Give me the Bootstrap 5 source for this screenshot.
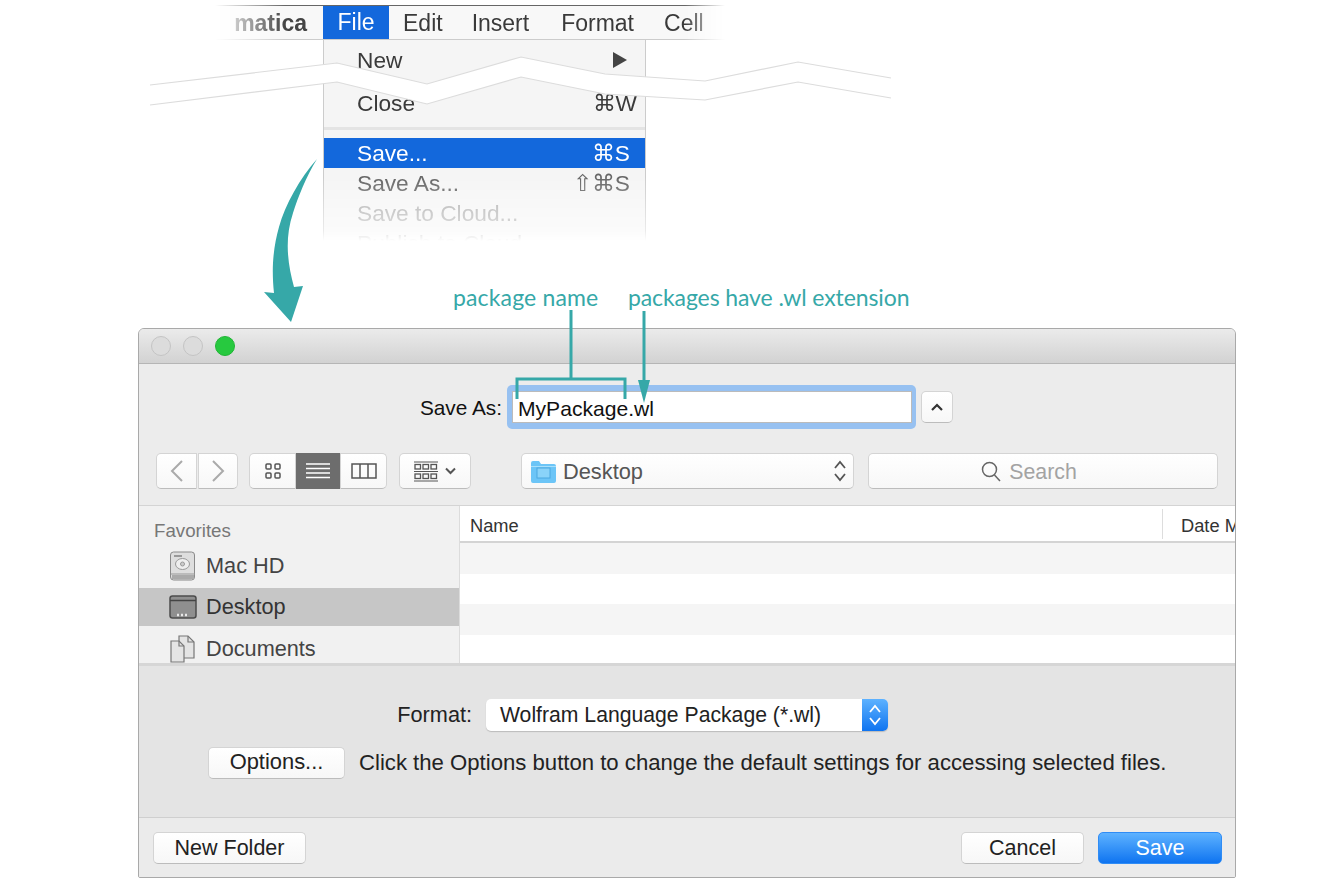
<!DOCTYPE html>
<html lang="en">
<head>
<meta charset="utf-8">
<title>Save As</title>
<link href="https://cdn.jsdelivr.net/npm/bootstrap@5.3.0/dist/css/bootstrap.min.css" rel="stylesheet">
<style>
html,body{background:#fff;margin:0;}
body{font-family:"Liberation Sans",Arial,sans-serif;color:#222;overflow:hidden;}
.stage{position:relative;width:1340px;height:882px;overflow:hidden;}
.top-crop{height:328px;padding-top:5px;}
.mbar{margin-left:215px;width:510px;height:35px;background:#f8f8f8;border-top:1px solid #666;border-bottom:1px solid #ccc;font-size:23px;color:#3a3a3a;
 -webkit-mask-image:linear-gradient(90deg,transparent 0,#000 70px,#000 470px,transparent 510px);mask-image:linear-gradient(90deg,transparent 0,#000 70px,#000 470px,transparent 510px);position:relative;overflow:hidden;}
.mbar-app{width:108px;text-align:right;padding-right:16px;font-weight:700;color:#444;white-space:nowrap;}
.mbar-file{width:66px;height:100%;background:#1368dc;color:#fff;text-align:center;line-height:32px;}
.mbar-item{line-height:32px;white-space:nowrap;}
.m-edit{margin-left:14px;}.m-insert{margin-left:29px;}.m-format{margin-left:32px;}.m-cell{margin-left:30px;}
.mdrop{margin-left:323px;width:323px;height:201px;background:#f5f5f5;border-left:1px solid #ccc;border-right:1px solid #ccc;font-size:22.7px;color:#3a3a3a;overflow:hidden;
 -webkit-mask-image:linear-gradient(180deg,#000 68%,rgba(0,0,0,.4) 95%,transparent 100%);mask-image:linear-gradient(180deg,#000 68%,rgba(0,0,0,.4) 95%,transparent 100%);}
.mrow{height:30px;line-height:30px;padding:0 15px 0 33px;white-space:nowrap;}
.mrow-new{height:40px;line-height:40px;margin-bottom:8px;}
.mrow-close{padding-right:8px;}
.mline{height:3px;background:#e4e4e4;margin:9px 0 8px;}
.mrow-on{background:#1368dc;color:#fff;}
.mrow-dim{color:#666;}
.mrow-off{color:#aaa;}
.tri{width:0;height:0;border-left:14px solid #444;border-top:8px solid transparent;border-bottom:8px solid transparent;margin-right:3px;}
.dlg{margin-left:138px;width:1098px;height:550px;border:1px solid #a9a9a9;border-radius:6px 6px 2px 2px;overflow:hidden;background:#ececec;}
.dlg-title{height:35px;background:linear-gradient(#ebebeb,#d2d2d2);border-bottom:1px solid #b5b5b5;padding-left:12px;gap:12px;}
.lamp{width:20px;height:20px;border-radius:50%;background:#dcdcdc;border:1px solid #c4c4c4;}
.lamp-go{background:#27c93f;border-color:#20b535;}
.dlg-top{height:142px;padding-top:21px;border-bottom:1px solid #d4d4d4;}
.sa-label{width:363px;text-align:right;font-size:20.8px;color:#111;padding-top:2px;}
.sa-ring{width:409px;height:44px;margin-left:5px;background:#97c1f1;border-radius:5px;padding:6px 4px 6px 5px;}
.sa-input{height:32px;border:1px solid #bbb;border-radius:0;padding:3px 5px 0;font-size:21.1px;font-family:inherit;color:#111;box-shadow:none;}
.sa-up{width:32px;height:32px;margin-left:5px;}
.mac{background:linear-gradient(#fff,#f7f7f7);border:1px solid #d4d4d4;border-bottom-color:#bcbcbc;border-radius:5px;color:#222;font-size:20px;padding:0;display:flex;align-items:center;justify-content:center;}
.mac:hover{background:#fff;border-color:#d4d4d4;color:#222;}
.tools{margin-top:24px;padding-left:17px;height:36px;}
.t-back{width:41px;height:36px;border-radius:5px 0 0 5px;}
.t-fwd{width:40px;height:36px;margin-left:1px;border-radius:0 5px 5px 0;}
.t-views{margin-left:11px;width:138px;height:36px;}
.t-views .mac{height:36px;border-radius:0;}
.v1{width:47px;border-radius:5px 0 0 5px!important;}
.v2{width:44px;background:#6d6d6d;border-color:#6d6d6d;}
.v2:hover{background:#6d6d6d;border-color:#6d6d6d;}
.v3{width:47px;border-radius:0 5px 5px 0!important;}
.t-arr{margin-left:12px;width:72px;height:36px;gap:7px;}
.t-path{margin-left:50px;width:333px;height:36px;justify-content:space-between;padding:0 6px 0 9px;color:#555;font-size:21.8px;}
.t-path span{gap:7px!important;}
.t-label{padding-top:2px;}
.t-search{margin-left:14px;width:350px;height:36px;color:#a3a3a3;font-size:21.3px;gap:8px;padding-right:28px;}
.t-search .t-label{padding-top:4px;}
.brow{height:157px;overflow:hidden;}
.side{width:321px;background:#f1f1f1;border-right:1px solid #dcdcdc;flex:none;padding-top:14px;}
.side-h{font-size:18.7px;font-weight:400;color:#777;padding-left:15px;height:21px;line-height:21px;margin-bottom:4px;}
.side-i{height:42px;gap:9px;padding-left:30px;font-size:21.7px;color:#444;background:transparent;border:0;border-radius:0;margin:0;}
.side-on{height:38px;background:#c6c6c6;color:#333;margin-top:1px;}
.side-doc{height:46px;}
.flist{flex:1;background:#fff;min-width:0;overflow:hidden;}
.fhead{height:37px;border-bottom:2px solid #d4d4d4;font-size:18.3px;color:#333;}
.fh-name{width:703px;padding-left:10px;height:30px;line-height:33px;border-right:1px solid #ddd;flex:none;}
.fh-date{padding-left:18px;white-space:nowrap;line-height:33px;height:30px;}
.frow{height:30.5px;}
.frow-alt{background:#f5f5f5;}
.sep3{height:3px;background:#d6d6d6;}
.acc{height:152px;background:#e4e4e4;border-bottom:1px solid #cfcfcf;padding-top:32px;font-size:21.7px;color:#222;}
.fm-label{width:333px;text-align:right;padding-top:1px;}
.fm-sel{margin-left:14px;width:402px;height:32px;background:#fff;border-radius:5px;box-shadow:0 1px 1px #bbb;overflow:hidden;}
.fm-text{padding-left:14px;flex:1;font-size:21.2px;padding-top:1px;}
.fm-stp{width:26px;height:32px;background:linear-gradient(#5db2ff,#0f74f0);}
.opt{margin-top:15px;padding-left:69px;gap:14px;height:32px;}
.opt-note{font-size:22.15px;line-height:32px;}
.b-opt{width:137px;height:32px;font-size:21.9px!important;}
.foot{height:59px;padding:14px 13px 0 14px;background:#ebebeb;}
.b-nf{width:153px;height:32px;}
.b-can{width:123px;height:32px;}
.b-sav{width:124px;height:32px;margin-left:14px;background:linear-gradient(#5db2ff,#0f74f0);color:#fff;border-color:#2f8cf5;}
.b-sav:hover{background:linear-gradient(#5db2ff,#0f74f0);color:#fff;border-color:#2f8cf5;}
.mactxt{font-size:21.5px;}
.callout{position:absolute;color:#36a8a8;font-family:Lato,"Open Sans",sans-serif;font-size:23px;line-height:28px;white-space:nowrap;}
.c1{left:453px;top:283px;letter-spacing:.15px;}
.c2{left:628px;top:283px;letter-spacing:-.1px;}
.overlay{position:absolute;left:0;top:0;pointer-events:none;}
</style>
</head>
<body>
<div class="stage">
  <div class="top-crop">
    <div class="mbar d-flex align-items-center">
      <div class="mbar-app mbar-item">matica</div>
      <div class="mbar-file">File</div>
      <div class="mbar-item m-edit">Edit</div>
      <div class="mbar-item m-insert">Insert</div>
      <div class="mbar-item m-format">Format</div>
      <div class="mbar-item m-cell">Cell</div>
    </div>
    <div class="mdrop">
      <div class="mrow mrow-new d-flex justify-content-between align-items-center"><span>New</span><span class="tri"></span></div>
      <div class="mrow mrow-close d-flex justify-content-between"><span>Close</span><span>⌘W</span></div>
      <div class="mline"></div>
      <div class="mrow mrow-on d-flex justify-content-between"><span>Save...</span><span>⌘S</span></div>
      <div class="mrow mrow-dim d-flex justify-content-between"><span>Save As...</span><span>⇧⌘S</span></div>
      <div class="mrow mrow-off">Save to Cloud...</div>
      <div class="mrow mrow-off">Publish to Cloud</div>
    </div>
  </div>

  <div class="dlg">
    <div class="dlg-title d-flex align-items-center">
      <span class="lamp"></span><span class="lamp"></span><span class="lamp lamp-go"></span>
    </div>
    <div class="dlg-top">
      <div class="d-flex align-items-center">
        <div class="sa-label">Save As:</div>
        <div class="sa-ring"><input class="form-control sa-input" value="MyPackage.wl" aria-label="Save As"></div>
        <button class="btn mac sa-up" aria-label="Collapse"><svg width="14" height="9" viewBox="0 0 14 9"><path d="M2 7 7 2l5 5" fill="none" stroke="#333" stroke-width="2.2"/></svg></button>
      </div>
      <div class="tools d-flex align-items-center">
        <button class="btn mac t-back" aria-label="Back"><svg width="14" height="24" viewBox="0 0 14 24"><path d="M12 2 2 12l10 10" fill="none" stroke="#aaa" stroke-width="2"/></svg></button>
        <button class="btn mac t-fwd" aria-label="Forward"><svg width="14" height="24" viewBox="0 0 14 24"><path d="M2 2l10 10L2 22" fill="none" stroke="#aaa" stroke-width="2"/></svg></button>
        <div class="t-views d-flex">
          <button class="btn mac v1" aria-label="Icons"><svg width="18" height="18" viewBox="0 0 18 18" fill="none" stroke="#555" stroke-width="1.5"><rect x="2" y="2" width="5" height="5" rx="1"/><rect x="11" y="2" width="5" height="5" rx="1"/><rect x="2" y="11" width="5" height="5" rx="1"/><rect x="11" y="11" width="5" height="5" rx="1"/></svg></button>
          <button class="btn mac v2" aria-label="List"><svg width="24" height="18" viewBox="0 0 24 18" stroke="#fff" stroke-width="1.4"><path d="M0 2h24M0 6.500h24M0 11h24M0 15.500h24"/></svg></button>
          <button class="btn mac v3" aria-label="Columns"><svg width="26" height="16" viewBox="0 0 26 16" fill="none" stroke="#555" stroke-width="1.5"><rect x="1" y="1" width="24" height="14"/><path d="M9 1v14M17 1v14"/></svg></button>
        </div>
        <button class="btn mac t-arr" aria-label="Arrange"><svg width="24" height="21" viewBox="0 0 24 21" fill="none" stroke="#555" stroke-width="1.3"><path d="M0 1h24M0 10.500h24M0 20h24" stroke-width="1"/><rect x="1" y="3.500" width="5.500" height="4.500"/><rect x="9" y="3.500" width="5.500" height="4.500"/><rect x="17" y="3.500" width="5.500" height="4.500"/><rect x="1" y="13" width="5.500" height="4.500"/><rect x="9" y="13" width="5.500" height="4.500"/><rect x="17" y="13" width="5.500" height="4.500"/></svg><svg width="11" height="8" viewBox="0 0 11 8"><path d="M1 1.500l4.500 4.500L10 1.500" fill="none" stroke="#555" stroke-width="2"/></svg></button>
        <button class="btn mac t-path">
          <span class="d-flex align-items-center"><svg width="25" height="23" viewBox="0 0 25 23"><path d="M0 3q0-2 2-2h6l2 3h13q2 0 2 2v15q0 2-2 2H2q-2 0-2-2z" fill="#6cc5f7"/><path d="M0 6h25v1H0z" fill="#a9e0fb"/><rect x="6" y="8" width="13" height="10" fill="#8ad3f9" stroke="#4ba8e0"/></svg><span class="t-label">Desktop</span></span>
          <svg width="14" height="24" viewBox="0 0 14 24" fill="none" stroke="#555" stroke-width="1.800"><path d="M2 9l5-6 5 6M2 15l5 6 5-6"/></svg>
        </button>
        <button class="btn mac t-search"><svg width="20" height="21" viewBox="0 0 20 21" fill="none" stroke="#666" stroke-width="1.500"><circle cx="8.500" cy="8.500" r="7"/><path d="M13.500 14l5.500 6"/></svg><span class="t-label">Search</span></button>
      </div>
    </div>
    <div class="brow d-flex">
      <div class="side">
        <div class="side-h">Favorites</div>
        <div class="side-i d-flex align-items-center">
          <svg width="28" height="30" viewBox="0 0 28 30"><rect x="1.500" y="1" width="24" height="28" rx="3" fill="#dedede" stroke="#8a8a8a"/><path d="M2 23h24" stroke="#999"/><rect x="3" y="24" width="22" height="4" fill="#aaa"/><ellipse cx="13.500" cy="13" rx="7" ry="5.500" fill="#eee" stroke="#999"/><circle cx="13.500" cy="13" r="2" fill="#ccc" stroke="#999"/><path d="M5 5h8" stroke="#999" stroke-width="2"/></svg>
          <span>Mac HD</span>
        </div>
        <div class="side-i side-on d-flex align-items-center">
          <svg width="28" height="24" viewBox="0 0 28 24"><rect x="1" y="1" width="26" height="22" rx="2.500" fill="#8f8f8f" stroke="#4c4c4c" stroke-width="1.500"/><path d="M1 5.500h26" stroke="#444" stroke-width="1.500"/><path d="M8 20h2M12 20h2M16 20h2" stroke="#e8e8e8" stroke-width="2.500"/></svg>
          <span>Desktop</span>
        </div>
        <div class="side-i side-doc d-flex align-items-center">
          <svg width="28" height="28" viewBox="0 0 28 28" fill="#e4e4e4" stroke="#777" stroke-width="1.200"><path d="M10 1h9l6 6v16H10z"/><path d="M19 1v6h6" fill="none"/><path d="M2 6h8l5 5v16H2z"/><path d="M10 6v5h5" fill="none"/></svg>
          <span>Documents</span>
        </div>
      </div>
      <div class="flist">
        <div class="fhead d-flex align-items-center"><div class="fh-name">Name</div><div class="fh-date">Date M</div></div>
        <div class="frow frow-alt"></div>
        <div class="frow"></div>
        <div class="frow frow-alt"></div>
        <div class="frow"></div>
      </div>
    </div>
    <div class="sep3"></div>
    <div class="acc">
      <div class="d-flex align-items-center">
        <div class="fm-label">Format:</div>
        <div class="fm-sel d-flex align-items-center">
          <div class="fm-text">Wolfram Language Package (*.wl)</div>
          <div class="fm-stp d-flex align-items-center justify-content-center"><svg width="14" height="24" viewBox="0 0 14 24" fill="none" stroke="#fff" stroke-width="1.800"><path d="M2 9l5-6 5 6M2 15l5 6 5-6"/></svg></div>
        </div>
      </div>
      <div class="opt d-flex align-items-center">
        <button class="btn mac mactxt b-opt">Options...</button>
        <span class="opt-note">Click the Options button to change the default settings for accessing selected files.</span>
      </div>
    </div>
    <div class="foot d-flex justify-content-between">
      <button class="btn mac mactxt b-nf">New Folder</button>
      <div class="d-flex">
        <button class="btn mac mactxt b-can">Cancel</button>
        <button class="btn mac mactxt b-sav">Save</button>
      </div>
    </div>
  </div>

  <svg class="overlay" width="1340" height="882" viewBox="0 0 1340 882" fill="none">
    <polygon points="150,85 337,63 427,84 521,57 605,74 705,81 798,62 891,78 891,98 798,82 705,100 605,94 521,77 427,104 337,82 150,105" fill="#fff"/>
    <polyline points="150,85 337,63 427,84 521,57 605,74 705,81 798,62 891,78" stroke="#dcdcdc" stroke-width="1.200"/>
    <polyline points="150,105 337,82 427,104 521,77 605,94 705,100 798,82 891,98" stroke="#dcdcdc" stroke-width="1.200"/>
    <path d="M317 159C300 178 285 205 279 227C274 245 271 265 274 293L264 292L291 322L303 286L294 287C288 265 284 240 293 213C298 197 306 177 317 159Z" fill="#36a8a8"/>
    <path d="M571 310V379M517 399V379H625V399" stroke="#36a8a8" stroke-width="3"/>
    <path d="M644 311V392" stroke="#36a8a8" stroke-width="3"/>
    <path d="M638 380H650L644 403Z" fill="#36a8a8"/>
  </svg>
  <div class="callout c1">package name</div>
  <div class="callout c2">packages have .wl extension</div>
</div>
<script src="https://cdn.jsdelivr.net/npm/bootstrap@5.3.0/dist/js/bootstrap.bundle.min.js"></script>
</body>
</html>
